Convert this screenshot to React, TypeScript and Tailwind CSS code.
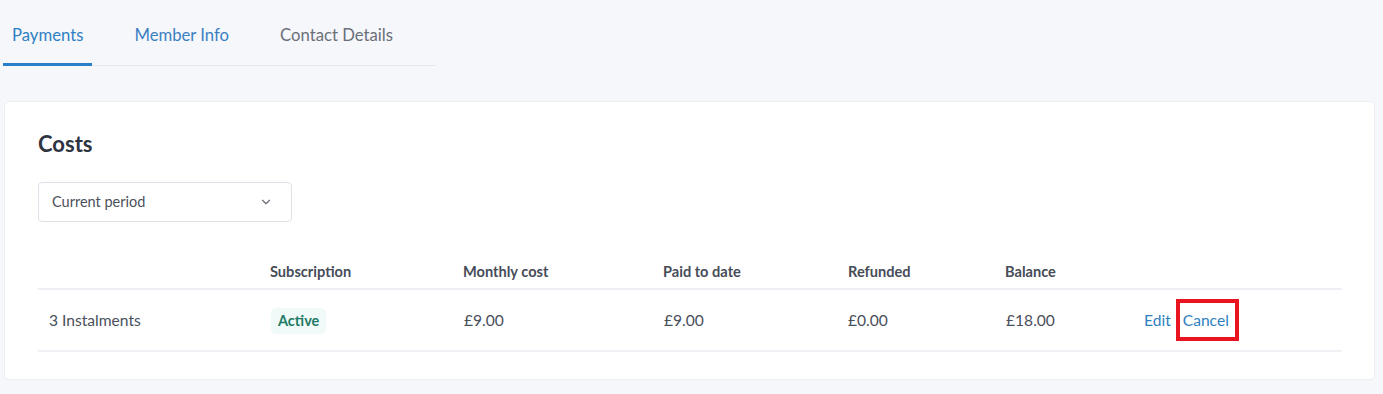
import { ChevronDown } from "lucide-react";

const tabs = [
  { label: "Payments", active: true, color: "text-[#2f7fc4]" },
  { label: "Member Info", active: false, color: "text-[#3a80c2]" },
  { label: "Contact Details", active: false, color: "text-[#6b6f78]" },
];

const cols = [
  { label: "", w: "w-[221px]" },
  { label: "Subscription", w: "w-[193px]" },
  { label: "Monthly cost", w: "w-[200px]" },
  { label: "Paid to date", w: "w-[185px]" },
  { label: "Refunded", w: "w-[157px]" },
  { label: "Balance", w: "w-[140px]" },
  { label: "", w: "flex-1" },
];

export default function App() {
  return (
    <div className="min-h-[394px] w-full bg-[#f6f7fb] font-['Lato','Noto_Sans',sans-serif] pb-[14px]">
      {/* tabs */}
      <div className="ml-[3px] flex w-[433px] gap-[33px] border-b border-[#e6e8ee]">
        {tabs.map((t) => (
          <div
            key={t.label}
            className={`px-[9px] pt-[23px] pb-[15px] text-[16.7px] leading-[24px] ${t.color} ${
              t.active ? "border-b-[3px] border-[#2a7fc9] -mb-px" : "border-b-[3px] border-transparent"
            }`}
          >
            {t.label}
          </div>
        ))}
      </div>

      {/* card */}
      <div className="ml-[4px] mr-[8px] mt-[35px] rounded-[5px] border border-[#eceef2] bg-white pl-[33px] pr-[32px] pt-[28px] pb-[27px]">
        <h2 className="text-[22px] leading-[28px] font-bold text-[#2f3441]">Costs</h2>

        <div className="mt-[24px] flex h-[40px] w-[254px] items-center justify-between rounded-[4px] border border-[#dfe2e8] pl-[13px] pr-[18px]">
          <span className="text-[14.5px] text-[#4b505c]">Current period</span>
          <ChevronDown className="h-[14px] w-[14px] text-[#6b6f78]" strokeWidth={2} />
        </div>

        <div className="mt-[30px]">
          <div className="flex h-[38px] items-center border-b-2 border-[#edeff4] pt-[4px]">
            {cols.map((c, i) => (
              <div key={i} className={`${c.w} pl-[11px] text-[14.6px] font-bold text-[#474c59]`}>
                {c.label}
              </div>
            ))}
          </div>
          <div className="flex h-[62px] items-center border-b-2 border-[#f0f1f5] pt-[2px] text-[15.6px] text-[#4a4f5b]">
            <div className="w-[221px] pl-[11px]">3 Instalments</div>
            <div className="w-[193px] pl-[12px]">
              <span className="inline-block rounded-[5px] bg-[#f0fbf9] px-[7px] py-[2px] text-[14.5px] leading-[22px] font-bold text-[#1f7a66]">
                Active
              </span>
            </div>
            <div className="w-[200px] pl-[12px]">£9.00</div>
            <div className="w-[185px] pl-[12px]">£9.00</div>
            <div className="w-[157px] pl-[11px]">£0.00</div>
            <div className="w-[140px] pl-[12px]">£18.00</div>
            <div className="flex flex-1 items-center gap-[12px] pl-[10px] text-[15.6px] text-[#2f7fc1]">
              <span>Edit</span>
              <span className="relative leading-[21px]">
                Cancel
                <span className="pointer-events-none absolute left-[-7px] right-[-10px] top-[-11px] bottom-[-10px] border-[4px] border-[#e8141f]" />
              </span>
            </div>
          </div>
        </div>
      </div>
    </div>
  );
}
